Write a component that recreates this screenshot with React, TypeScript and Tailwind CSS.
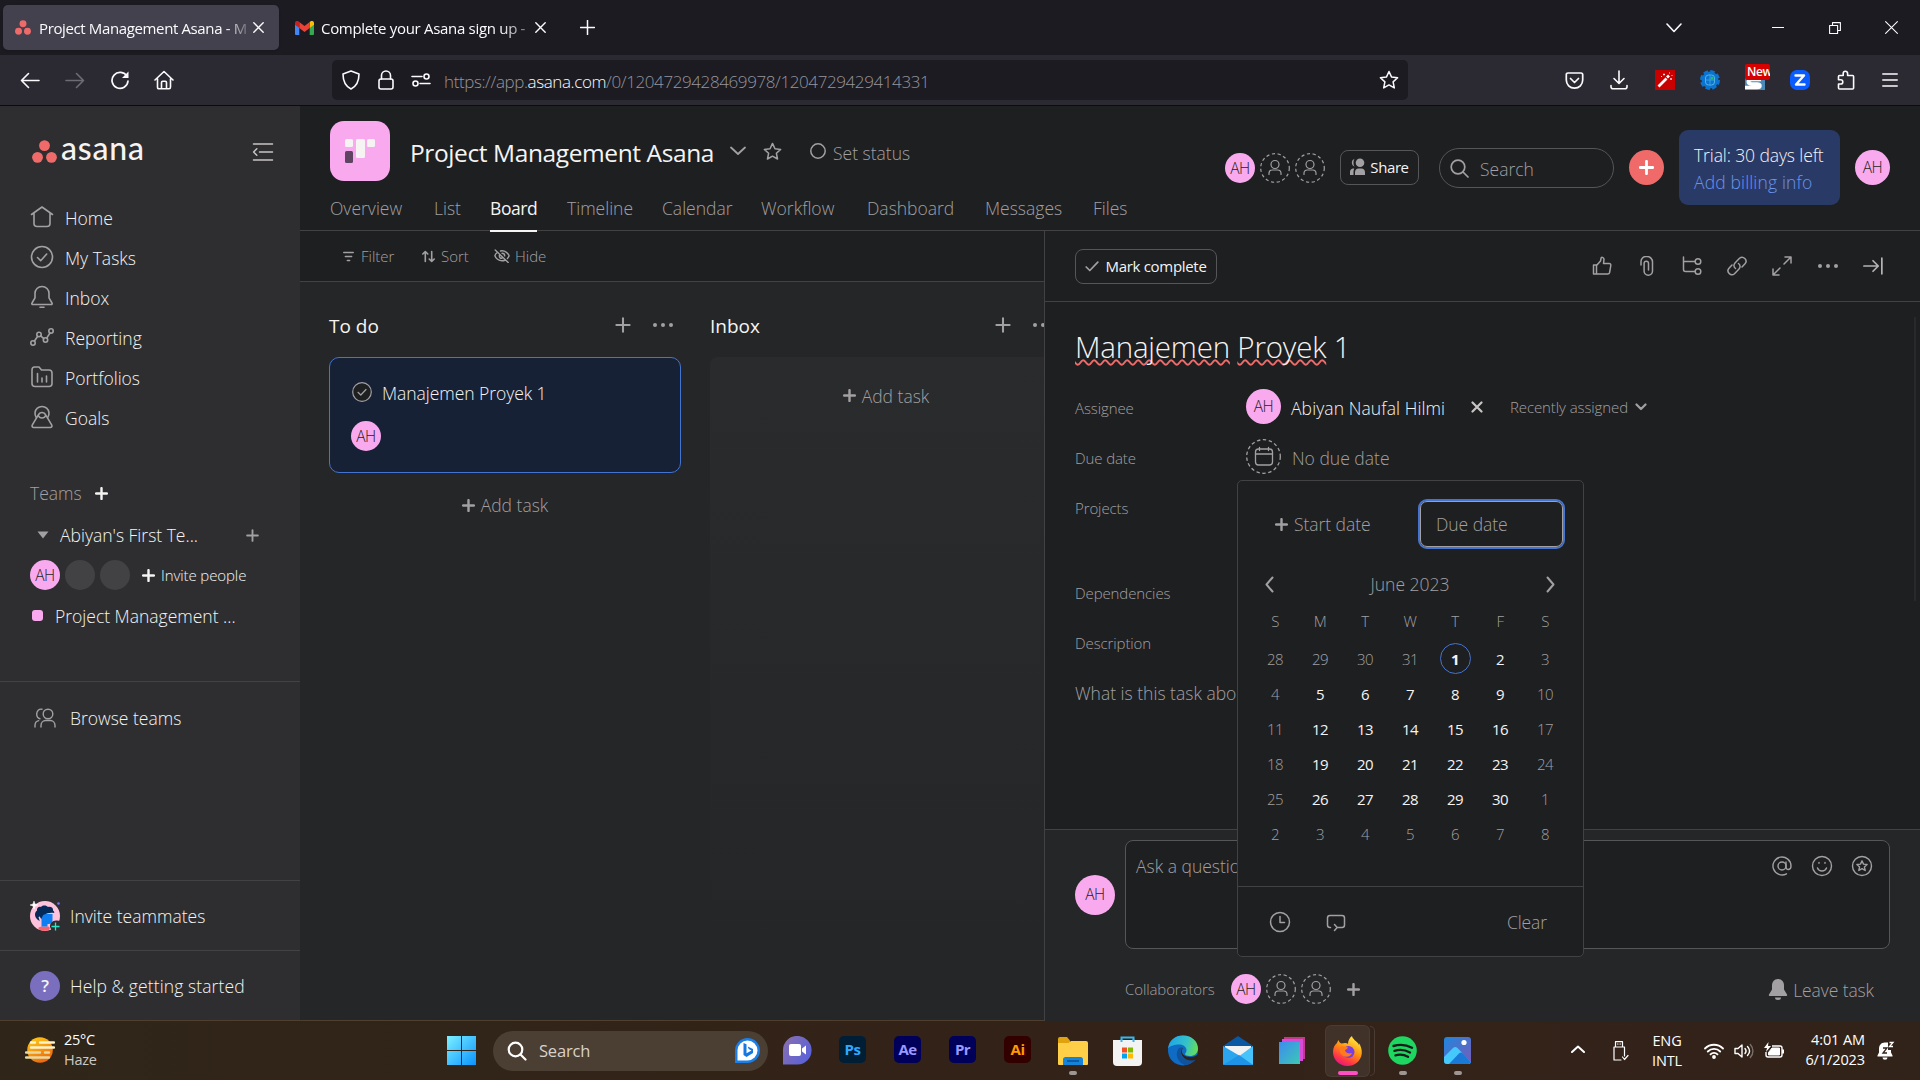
import React from "react";

type IconProps = { w?: number; h?: number; vb?: string; sw?: number; className?: string; children: React.ReactNode };

function Ic({ w = 20, h, vb = "0 0 20 20", sw = 1.5, className = "", children }: IconProps) {
  return (
    <svg
      width={w}
      height={h ?? w}
      viewBox={vb}
      fill="none"
      stroke="currentColor"
      strokeWidth={sw}
      strokeLinecap="round"
      strokeLinejoin="round"
      className={"shrink-0 " + className}
    >
      {children}
    </svg>
  );
}

function Plus({ size = 13, sw = 2.6, className = "" }: { size?: number; sw?: number; className?: string }) {
  return (
    <Ic w={size} vb="0 0 14 14" sw={sw} className={className}>
      <path d="M7 1.2v11.6M1.2 7h11.6" />
    </Ic>
  );
}

function Dots({ className = "" }: { className?: string }) {
  return (
    <Ic w={22} h={6} vb="0 0 22 6" sw={0} className={className}>
      <g fill="currentColor">
        <circle cx="3" cy="3" r="2" />
        <circle cx="11" cy="3" r="2" />
        <circle cx="19" cy="3" r="2" />
      </g>
    </Ic>
  );
}

function Avatar({ className }: { className: string }) {
  return (
    <div className={"flex shrink-0 items-center justify-center rounded-full bg-[#f9aaef] text-[#1e1f21] " + className}>
      <span className="mt-[1px] text-[15.500px] leading-none font-[350] tracking-[-0.5px]">AH</span>
    </div>
  );
}

function Ghost() {
  return (
    <Ic w={30} vb="0 0 30 30" sw={1.2} className="text-[#a2a0a2]">
      <circle cx="15" cy="15" r="14.3" strokeDasharray="3.2 2.6" strokeLinecap="butt" />
      <circle cx="15" cy="11.5" r="4" />
      <path d="M9 21.5v-1.2c0-2 1.500-3.300 3.400-3.300h5.200c1.900 0 3.400 1.300 3.400 3.300v1.200" />
    </Ic>
  );
}

const STAR = "M10 1.500l2.600 5.600 6 .7-4.500 4.100 1.200 6-5.300-3-5.300 3 1.200-6-4.500-4.100 6-.7z";

function AsanaDots({ w, h }: { w: number; h: number }) {
  return (
    <svg width={w} height={h} viewBox="0 0 24 22" className="shrink-0">
      <g fill="#f06a6a">
        <circle cx="12" cy="5.300" r="5.200" />
        <circle cx="5.300" cy="16.600" r="5.200" />
        <circle cx="18.700" cy="16.600" r="5.200" />
      </g>
    </svg>
  );
}

function BrowserTabs() {
  return (
    <div className="flex h-[55px] items-center bg-[#1c1b22] pl-[3px] text-[15px] font-normal text-[#fbfbfe]">
      <div className="flex h-[45px] w-[276px] items-center rounded-[5px] bg-[#42414d] pl-[12px] shadow">
        <AsanaDots w={16} h={15} />
        <div className="mt-[2px] ml-[8px] w-[208px] overflow-hidden tracking-[-0.37px] whitespace-nowrap [mask-image:linear-gradient(to_right,black_90%,transparent_103%)]">
          Project Management Asana - M
        </div>
        <Ic w={11} vb="0 0 11 11" sw={1.4} className="ml-[6px]">
          <path d="M.8.8l9.400 9.400M10.200.8L.8 10.200" />
        </Ic>
      </div>
      <svg width="19" height="14" viewBox="0 0 19 14" className="ml-[16px] shrink-0">
        <path d="M0 2v11a1 1 0 0 0 1 1h3.300V5z" fill="#4285f4" />
        <path d="M19 2v11a1 1 0 0 1-1 1h-3.300V5z" fill="#34a853" />
        <path d="M14.700 1v6L19 3.800V2c0-2-2.200-2.500-3.300-1.800z" fill="#fbbc04" />
        <path d="M4.300 7V1l5.200 4 5.200-4v6L9.500 11z" fill="#ea4335" />
        <path d="M0 2v1.800L4.300 7V1L3.300.2C2.200-.5 0 0 0 2z" fill="#c5221f" />
      </svg>
      <div className="mt-[2px] ml-[7px] w-[204px] overflow-hidden tracking-[-0.3px] whitespace-nowrap [mask-image:linear-gradient(to_right,black_88%,transparent_110%)]">
        Complete your Asana sign up -
      </div>
      <Ic w={11} vb="0 0 11 11" sw={1.4} className="ml-[10px]">
        <path d="M.8.8l9.400 9.400M10.200.8L.8 10.200" />
      </Ic>
      <Ic w={15} vb="0 0 15 15" sw={1.5} className="ml-[34px]">
        <path d="M7.500.5v14M.5 7.500h14" />
      </Ic>
      <Ic w={16} h={10} vb="0 0 16 10" sw={1.600} className="mr-[90px] ml-auto">
        <path d="M1 1l7 7.500L15 1" />
      </Ic>
      <Ic w={12} h={12} vb="0 0 12 12" sw={1} className="mr-[45px]">
        <path d="M0 5.500h12" />
      </Ic>
      <Ic w={12} vb="0 0 12 12" sw={1.1} className="mr-[44px]">
        <path d="M.6 3.500h8v8h-8zM3.500 3.200V.6h7.900v7.900H8.800" />
      </Ic>
      <Ic w={13} vb="0 0 13 13" sw={1.1} className="mr-[22px]">
        <path d="M.6.6l11.800 11.800M12.400.6L.6 12.400" />
      </Ic>
    </div>
  );
}

function BrowserToolbar() {
  return (
    <div className="flex h-[51px] items-center border-b border-[#0c0c0d] bg-[#2b2a33] pl-[20px] text-[#fbfbfe]">
      <Ic w={20} sw={1.6}>
        <path d="M1.500 10.500H19M8.500 3.500l-7 7 7 7" />
      </Ic>
      <Ic w={20} sw={1.6} className="ml-[25px] text-[#6d6c75]">
        <path d="M1 10.500h17.500M11.500 3.500l7 7-7 7" />
      </Ic>
      <Ic w={20} sw={1.7} className="ml-[25px]">
        <path d="M17 6.500A8 8 0 1 0 18 11" />
        <path d="M18.500 1.500v6.500h-6.500z" fill="currentColor" stroke="none" />
      </Ic>
      <Ic w={20} sw={1.6} className="ml-[24px]">
        <path d="M1 10l9-8.500L19 10M3.500 8.500V17c0 1 .6 1.800 1.500 1.800h10c.9 0 1.500-.8 1.500-1.800V8.500M7.500 18.500v-6c0-.8.500-1.200 1.200-1.200h2.600c.7 0 1.200.4 1.200 1.200v6" />
      </Ic>
      <div className="ml-[158px] flex h-[40px] w-[1076px] items-center rounded-[5px] bg-[#1c1b22] pl-[9px]">
        <Ic w={20} sw={1.6}>
          <path d="M10 1l8 3c0 7-2 12-8 15C4 16 2 11 2 4z" />
        </Ic>
        <Ic w={18} h={20} vb="0 0 18 20" sw={1.6} className="ml-[16px]">
          <rect x="2" y="9" width="14" height="10" rx="2" />
          <path d="M4.500 9V5.500a4.500 4.500 0 0 1 9 0V9" />
        </Ic>
        <Ic w={20} sw={1.6} className="ml-[16px]">
          <path d="M1 6.500h10M9 13.500h10" />
          <circle cx="15.500" cy="6.500" r="2.500" />
          <circle cx="4.500" cy="13.500" r="2.500" />
        </Ic>
        <div className="mt-[4px] ml-[13px] text-[17px] tracking-[-0.4px] whitespace-nowrap text-[#96959c]">
          https://app.<span className="text-[#fbfbfe]">asana.com</span>/0/1204729428469978/1204729429414331
        </div>
        <Ic w={20} sw={1.5} className="mr-[9px] ml-auto">
          <path d={STAR} />
        </Ic>
      </div>
      <div className="mr-[22px] ml-auto flex items-center">
        <Ic w={19} vb="0 0 19 19" sw={1.7}>
          <path d="M3 2h13c1 0 1.700.7 1.700 1.700V9c0 4.500-3.500 8.200-8.200 8.200S1.300 13.500 1.300 9V3.700C1.300 2.700 2 2 3 2zM5.500 7.500l4 4 4-4" />
        </Ic>
        <Ic w={18} h={20} vb="0 0 18 20" sw={1.6} className="ml-[26px]">
          <path d="M9 1v12M4 8.500l5 5 5-5M1 15.500v1.200c0 1.200.8 2 2 2h12c1.200 0 2-.8 2-2v-1.200" />
        </Ic>
        <svg width="20" height="20" viewBox="0 0 20 20" className="ml-[27px]">
          <rect width="20" height="20" fill="#c80000" />
          <path d="M3.500 16.500l8-8" stroke="#fff" strokeWidth="2.600" />
          <path d="M12 7.500l2-2" stroke="#fff" strokeWidth="2.600" />
          <path d="M9 3.500v2M8 4.500h2M16 8v2M15 9h2M14.500 2.500l.01 1M17 5l.01 1M6 6.500h1M12 3l.01.01" stroke="#ffd5d5" strokeWidth="1" />
        </svg>
        <svg width="20" height="20" viewBox="0 0 20 20" className="ml-[25px]">
          <circle cx="10" cy="10" r="8.400" fill="#0b74d1" />
          <circle cx="10" cy="10" r="8.600" fill="none" stroke="#0b74d1" strokeWidth="2.800" strokeDasharray="4.500 2.250" />
          <rect x="5.500" y="5" width="9" height="10" rx="3" fill="none" stroke="#54b4e8" strokeWidth="1" />
          <path d="M10 4.500v11M5.500 10h9" stroke="#3a9fe0" strokeWidth="1" />
          <circle cx="12" cy="8" r="1.500" fill="#23c06b" />
        </svg>
        <div className="relative ml-[25px] h-[20px] w-[20px] overflow-visible">
          <svg width="20" height="20" viewBox="0 0 20 20">
            <rect width="20" height="20" fill="#4b8ab8" />
            <path d="M16 9.500H7c-5 0-5 4.500 0 4.500h5c4 0 4 3.500 0 3.500H0" stroke="#fff" strokeWidth="3.500" fill="none" />
          </svg>
          <div className="absolute -top-[6px] left-0 h-[16px] w-[25px] overflow-hidden rounded-[2px] bg-[#d60000] pl-[2px] text-[12px] leading-[15px] font-semibold tracking-[-0.4px] text-white">
            New
          </div>
        </div>
        <div className="ml-[25px] flex h-[20px] w-[20px] items-center justify-center rounded-[7px] bg-[#0b5cff]">
          <Ic w={12} vb="0 0 12 12" sw={2.4}>
            <path d="M1.500 1.500h8.500l-8 9h8.500" />
          </Ic>
        </div>
        <Ic w={20} sw={1.600} className="ml-[26px]">
          <path d="M2.500 18V14h2.200a2.100 2.100 0 1 0 0-4.200H2.500V6.500c0-.6.400-1 1-1h3.700V3.400a2.200 2.200 0 0 1 4.400 0v2.100h5c.6 0 1 .4 1 1V18c0 .6-.4 1-1 1h-13c-.6 0-1.100-.4-1.100-1z" />
        </Ic>
        <Ic w={16} h={14} vb="0 0 16 14" sw={1.5} className="ml-[26px]">
          <path d="M.8 1h14.400M.8 7h14.400M.8 13h14.400" />
        </Ic>
      </div>
    </div>
  );
}

const navItems: { label: string; icon: React.ReactNode }[] = [
  { label: "Home", icon: <path d="M1.500 9.500L12 2l10.500 7.500M4 8v10.500c0 1.700 1.300 3 3 3h10c1.700 0 3-1.300 3-3V8" /> },
  {
    label: "My Tasks",
    icon: (
      <>
        <circle cx="12" cy="12" r="10.500" />
        <path d="M7.500 12.500l3.200 3.200 6-6.700" />
      </>
    ),
  },
  {
    label: "Inbox",
    icon: (
      <>
        <path d="M12 1.500c-4 0-7 3-7 7v4.300L2 18c-.5.800 0 1.500.8 1.500h18.400c.8 0 1.300-.7.800-1.500l-3-5.200V8.500c0-4-3-7-7-7z" />
        <path d="M10 22.300h4" />
      </>
    ),
  },
  {
    label: "Reporting",
    icon: (
      <>
        <circle cx="3" cy="18" r="2.200" />
        <circle cx="9" cy="9.500" r="2.200" />
        <circle cx="15.500" cy="15" r="2.200" />
        <circle cx="21" cy="6" r="2.200" />
        <path d="M4.300 16.200l3.400-4.900M10.700 10.900l3.100 2.700M16.700 13.100L20 8" />
      </>
    ),
  },
  {
    label: "Portfolios",
    icon: (
      <>
        <path d="M2 5c0-1.700 1-3 2.500-3H9l2.500 3H19c1.700 0 3 1.300 3 3v10.500c0 1.700-1.300 3-3 3H5c-1.700 0-3-1.300-3-3z" />
        <path d="M7.500 8.500v8.500M12 13v4M16.500 11v6" />
      </>
    ),
  },
  {
    label: "Goals",
    icon: (
      <>
        <path d="M6.300 12.500a7 7 0 1 1 11.400 0" />
        <path d="M8.200 10.200c1.800-3.600 5.800-3.600 7.600 0l6 10c.5 1.200-.2 2.300-1.500 2.300H3.700c-1.300 0-2-1.100-1.500-2.300z" />
        <path d="M8.300 10.500a4 4 0 0 0 7.400 0" />
      </>
    ),
  },
];

function Sidebar() {
  return (
    <aside className="flex h-[914px] w-[300px] shrink-0 flex-col bg-[#2e2e30] text-[17.500px] text-[#f5f4f3]">
      <div className="flex h-[91px] items-center pl-[32px]">
        <AsanaDots w={25} h={23} />
        <span className="-mt-[7px] ml-[4px] w-[84px] font-['Lato'] text-[32px] leading-[30px] font-medium tracking-[0.8px]">asana</span>
        <Ic w={22} h={18} vb="0 0 22 18" sw={1.5} className="ml-[107px] text-[#c7c4c4]">
          <path d="M1.500 1h19M7.500 9h13M1.500 17h19M4.800 5.800L1.600 9l3.200 3.200" />
        </Ic>
      </div>
      <nav className="flex flex-col">
        {navItems.map((n) => (
          <div key={n.label} className="flex h-[40px] items-center pl-[30px]">
            <Ic w={24} vb="0 0 24 24" sw={1.6} className="text-[#a2a0a2]">
              {n.icon}
            </Ic>
            <span className="mt-[2px] ml-[11px]">{n.label}</span>
          </div>
        ))}
      </nav>
      <div className="mt-[37px] flex h-[38px] items-center pl-[30px]">
        <span className="mt-[1px] w-[65px] text-[#a2a0a2]">Teams</span>
        <Plus />
      </div>
      <div className="mt-[2px] flex h-[42px] items-center pl-[37px]">
        <svg width="12" height="8" viewBox="0 0 12 8">
          <path d="M.5.5h11L6 7.500z" fill="#a2a0a2" />
        </svg>
        <span className="ml-[11px] w-[186px]">Abiyan's First Te...</span>
        <Plus className="text-[#a2a0a2]" sw={2} />
      </div>
      <div className="mt-[4px] flex h-[30px] items-center gap-[5px] pl-[30px]">
        <Avatar className="h-[30px] w-[30px]" />
        <div className="h-[30px] w-[30px] rounded-full bg-[#424244]" />
        <div className="h-[30px] w-[30px] rounded-full bg-[#424244]" />
        <Plus className="ml-[7px]" />
        <span className="ml-[1px] text-[15px] tracking-[-0.1px]">Invite people</span>
      </div>
      <div className="mt-[7px] flex h-[36px] items-center pl-[32px]">
        <div className="h-[11px] w-[11px] rounded-[3px] bg-[#f9aaef]" />
        <span className="mt-[2px] ml-[12px] whitespace-nowrap">Project Management ...</span>
      </div>
      <div className="mt-[48px] flex h-[199px] border-t border-[#424244] pt-[15px] pl-[34px]">
        <div className="flex h-[42px] items-center">
          <Ic w={22} vb="0 0 22 22" sw={1.4} className="text-[#a2a0a2]">
            <circle cx="14" cy="7" r="4.800" />
            <path d="M8 2.200C5 1.600 2.700 4 2.700 7c0 2.200 1.300 4.200 3.200 4.700M7 20v-1.500c0-3 2.200-5 4.500-5h5c2.300 0 4.500 2 4.500 5V20M1 20v-1.500c0-2.600 1.500-4.500 3.700-4.900" />
          </Ic>
          <span className="ml-[14px]">Browse teams</span>
        </div>
      </div>
      <div className="flex h-[70px] items-center border-t border-[#424244] pl-[30px]">
        <svg width="30" height="30" viewBox="0 0 30 30">
          <circle cx="15" cy="15" r="15" fill="#ffc2dc" />
          <path d="M8.500 26.500l3-1h7l1.500 1.500-1 2c-3 1.200-7 1.200-10.500-.5z" fill="#f9626a" />
          <path d="M10 13h12.500v6c0 3-2 4.500-5 4v2.500h-6v-7z" fill="#0d7ff2" />
          <path d="M8 19c-2-1.500-3-3.500-3-5.500C5 11 6.500 10 7 9.500 6.500 7 9 5 11 6c2-2.500 6-1.500 7 0 3-.8 5.500 1 5 3.500.8.500 1.500 1.500 1.200 2.500-3-.8-6-.3-11 2l-2 4-1.500-2.500-1.200.5 1.200 4z" fill="#052a57" />
          <path d="M27 19.500c-4-.5-7.500 2.500-7 6.500l1.500 3.500H30V20z" fill="#2e2e30" />
          <path d="M25.500 21.500v8M21.500 25.500h8" stroke="#25e8c8" strokeWidth="1.300" />
          <path d="M4 0l1 3 3 1-3 1-1 3-1-3-3-1 3-1z" fill="#fff" stroke="#fff" strokeWidth="0.500" />
          <circle cx="28.500" cy="2.500" r="1.300" fill="#796eff" />
        </svg>
        <span className="mt-[1px] ml-[10px]">Invite teammates</span>
      </div>
      <div className="flex h-[70px] items-center border-t border-[#424244] pl-[30px]">
        <div className="flex h-[30px] w-[30px] items-center justify-center rounded-full bg-[#7a6fbe] text-[17px] font-semibold">?</div>
        <span className="mt-[1px] ml-[10px] tracking-[0.1px]">Help &amp; getting started</span>
      </div>
    </aside>
  );
}

const projectTabs: [string, string][] = [
  ["Overview", "w-[74px]"],
  ["List", "w-[26px]"],
  ["Board", "w-[47px]"],
  ["Timeline", "w-[65px]"],
  ["Calendar", "w-[69px]"],
  ["Workflow", "w-[76px]"],
  ["Dashboard", "w-[88px]"],
  ["Messages", "w-[78px]"],
  ["Files", "w-[33px]"],
];

function ProjectHeader() {
  return (
    <header className="flex h-[125px] shrink-0 border-b border-[#424244] bg-[#1e1f21] text-[17.500px] text-[#a2a0a2]">
      <div className="flex w-[925px] flex-col pt-[15px] pl-[30px]">
        <div className="flex h-[60px] items-center">
          <svg width="60" height="60" viewBox="0 0 60 60">
            <rect width="60" height="60" rx="14" fill="#f9aaef" />
            <g fill="#f5f4f3">
              <rect x="15" y="18" width="8" height="8" rx="1.500" />
              <rect x="26" y="18" width="9" height="19" rx="1.500" />
              <rect x="37" y="18" width="8" height="8" rx="1.500" />
            </g>
            <rect x="15" y="30" width="8" height="12" rx="1.500" fill="#5f4462" />
          </svg>
          <h1 className="mt-[4px] ml-[20px] w-[320px] text-[24.500px] font-normal tracking-[-0.4px] whitespace-nowrap text-[#f5f4f3]">Project Management Asana</h1>
          <Ic w={16} h={10} vb="0 0 16 10" sw={1.8}>
            <path d="M1 1.500l7 6.500 7-6.500" />
          </Ic>
          <Ic w={19} sw={1.600} className="ml-[17px]">
            <path d={STAR} />
          </Ic>
          <Ic w={16} vb="0 0 16 16" sw={1.5} className="ml-[28px]">
            <circle cx="8" cy="8" r="7.200" />
          </Ic>
          <span className="mt-[4px] ml-[7px]">Set status</span>
        </div>
        <div className="flex h-[49px] gap-[30px] pt-[16px]">
          {projectTabs.map(([label, width]) => (
            <div key={label} className={"relative leading-[22px] whitespace-nowrap " + width + (label === "Board" ? " font-normal tracking-[-0.4px] text-[#f5f4f3]" : "")}>
              {label}
              {label === "Board" && <div className="absolute -bottom-[2px] left-0 h-[2px] w-full bg-[#f5f4f3]" />}
            </div>
          ))}
        </div>
      </div>
      <div className="flex items-center">
        <Avatar className="mr-[5px] h-[30px] w-[30px]" />
        <Ghost />
        <div className="w-[5px]" />
        <Ghost />
        <button className="-mt-[1px] ml-[15px] flex h-[35px] w-[79px] items-center justify-center gap-[4px] rounded-[8px] border border-[#565557] text-[15px] font-normal tracking-[-0.4px] text-[#f5f4f3]">
          <svg width="16" height="18" viewBox="0 0 16 18" className="-mt-[2px] shrink-0">
            <g fill="#a2a0a2">
              <circle cx="10" cy="4.800" r="4.300" />
              <path d="M4.500.8a4.300 4.300 0 0 0 0 8C3 6 3.200 3 4.500.8zM5 17v-2.800c0-2.200 1.500-3.700 3.500-3.700h3c2 0 3.500 1.500 3.500 3.700V17zM0 17v-2.800c0-2 1-3.300 2.800-3.700h1.500C3.700 12 3.500 13 3.500 14v3z" />
            </g>
          </svg>
          Share
        </button>
        <div className="ml-[20px] flex h-[40px] w-[175px] items-center rounded-full border border-[#565557] pl-[10px]">
          <Ic w={19} vb="0 0 19 19" sw={1.700}>
            <circle cx="8" cy="8" r="6.800" />
            <path d="M13 13l5 5" />
          </Ic>
          <span className="mt-[3px] ml-[11px]">Search</span>
        </div>
        <div className="-mt-[1px] ml-[15px] flex h-[35px] w-[35px] items-center justify-center rounded-full bg-[#f06a6a] text-white">
          <Plus size={15} />
        </div>
        <div className="-mt-[1px] ml-[15px] flex h-[75px] w-[161px] flex-col justify-center rounded-[9px] bg-[#2a3a67] pt-[2px] pl-[15px] leading-[27px] whitespace-nowrap text-[#f5f4f3]">
          <span className="tracking-[-0.1px]">Trial: 30 days left</span>
          <span className="tracking-[0.15px] text-[#6a93ea]">Add billing info</span>
        </div>
        <Avatar className="-mt-[1px] ml-[15px] h-[35px] w-[35px]" />
      </div>
    </header>
  );
}

function ColumnHead({ title, plusGap }: { title: string; plusGap: string }) {
  return (
    <div className="flex h-[28px] items-center text-[#a2a0a2]">
      <h2 className={"mt-[2px] text-[19px] font-normal whitespace-nowrap text-[#f5f4f3] " + plusGap}>{title}</h2>
      <Plus size={16} sw={1.8} />
      <Dots className="ml-[21px]" />
    </div>
  );
}

function Board() {
  return (
    <section className="flex w-[744px] shrink-0 flex-col bg-[#252628] text-[17.500px] text-[#a2a0a2]">
      <div className="flex h-[51px] items-center border-b border-[#424244] bg-[#1e1f21] pl-[43px] text-[15px]">
        <Ic w={11} h={11} vb="0 0 11 11" sw={1.600}>
          <path d="M.8 1.500h9.400M2.400 5.500h6.200M4.400 9.500h2.200" />
        </Ic>
        <span className="ml-[7px] w-[61px]">Filter</span>
        <Ic w={13} vb="0 0 13 13" sw={1.600}>
          <path d="M3.300 11.500v-10M.8 4l2.500-2.500L5.800 4M9.700 1.500v10M7.200 9l2.500 2.500L12.200 9" />
        </Ic>
        <span className="ml-[6px] w-[53px]">Sort</span>
        <Ic w={16} h={14} vb="0 0 16 14" sw={1.400}>
          <path d="M1.200 1l13 12.500M3.500 3.300C2 4.400 1 6 .9 6.800c.8 2.600 3.800 5 7.100 5 1.200 0 2.300-.3 3.300-.8M6.500 2c.5-.1 1-.2 1.500-.2 3.300 0 6.300 2.400 7.100 5-.3.9-.9 1.800-1.700 2.600M8 4.300c1.600 0 2.700 1.200 2.700 2.600M5.300 6.400c0 1.700 1.200 2.900 2.700 2.900" />
        </Ic>
        <span className="ml-[5px]">Hide</span>
      </div>
      <div className="flex flex-1 gap-[29px] overflow-hidden pt-[29px] pl-[29px]">
        <div className="flex w-[352px] shrink-0 flex-col">
          <ColumnHead title="To do" plusGap="w-[286px]" />
          <div className="mt-[18px] h-[116px] rounded-[10px] border border-[#4573d2] bg-[#172136] pt-[22px] pl-[21px]">
            <div className="flex h-[24px] items-center">
              <Ic w={20} sw={1.2} className="ml-[1px]">
                <circle cx="10" cy="10" r="9.300" fill="#1e1f21" />
                <path d="M6 10.300l2.800 2.700 5.200-5.500" />
              </Ic>
              <span className="mt-[3px] ml-[10px] tracking-[-0.05px] text-[#f5f4f3]">Manajemen Proyek 1</span>
            </div>
            <Avatar className="mt-[17px] h-[30px] w-[30px]" />
          </div>
          <div className="mt-[20px] flex h-[24px] items-center justify-center gap-[6px]">
            <Plus />
            <span className="mt-[1px]">Add task</span>
          </div>
        </div>
        <div className="flex w-[352px] shrink-0 flex-col">
          <ColumnHead title="Inbox" plusGap="w-[285px]" />
          <div className="mt-[18px] h-[588px] rounded-[8px] bg-linear-to-b from-[#2a2b2d] to-[#252628] pt-[26px]">
            <div className="flex h-[24px] items-center justify-center gap-[6px]">
              <Plus />
              <span className="mt-[2px]">Add task</span>
            </div>
          </div>
        </div>
      </div>
    </section>
  );
}

function DetailToolbar() {
  return (
    <div className="flex h-[71px] shrink-0 items-center border-b border-[#424244] pl-[30px]">
      <button className="flex h-[35px] w-[142px] items-center justify-center gap-[6px] rounded-[8px] border border-[#565557] text-[15px] font-normal tracking-[-0.3px] text-[#f5f4f3]">
        <Ic w={14} h={11} vb="0 0 14 11" sw={1.700} className="text-[#a2a0a2]">
          <path d="M1.200 6l3.600 3.500L12.800 1.200" />
        </Ic>
        Mark complete
      </button>
      <div className="mr-[37px] ml-auto flex items-center gap-[25px]">
        <Ic sw={1.500} className="ml-[1px]">
          <path d="M1.500 9h3v9h-3zM4.500 9.500L8.500 5l.7-3.300c.8-.8 2.800 0 2.800 1.800L11.500 7.500h5.500c1.300 0 2 .8 1.800 2l-1.200 7c-.2 1-1 1.500-2 1.500H4.500" />
        </Ic>
        <Ic sw={1.500}>
          <path d="M4 9V5.500a5 5 0 0 1 5-5h1a5.500 5.500 0 0 1 5.500 5.500v9a4.200 4.200 0 0 1-8.400 0V7.500a2.200 2.200 0 0 1 4.400 0V14" />
        </Ic>
        <Ic sw={1.500}>
          <path d="M1.500 1v12.500c0 1.300.8 2 2 2H13M1.500 5.500H13" />
          <circle cx="16" cy="5.500" r="2.800" />
          <circle cx="16" cy="15.500" r="2.800" />
        </Ic>
        <Ic sw={1.500}>
          <path d="M8.500 12.500c-2-1.500-2-4-.5-5.500l4.500-4.700a3.900 3.900 0 0 1 5.500 5.500l-3 3.200" />
          <path d="M11.500 7.500c2 1.500 2 4 .5 5.500l-4.500 4.700A3.900 3.900 0 0 1 2 12.200L5 9" />
        </Ic>
        <Ic sw={1.500}>
          <path d="M12 8l7-7M13 1h6v6M8 12l-7 7M7 19H1v-6" />
        </Ic>
        <Dots />
        <Ic w={20} h={18} vb="0 0 21 18" sw={1.800} className="-ml-[1px] text-[#b5b3b4]">
          <path d="M1 9h15M10.500 3.500L16 9l-5.500 5.500M19.800.8v16.400" />
        </Ic>
      </div>
    </div>
  );
}

const weeks = [
  [28, 29, 30, 31, 1, 2, 3],
  [4, 5, 6, 7, 8, 9, 10],
  [11, 12, 13, 14, 15, 16, 17],
  [18, 19, 20, 21, 22, 23, 24],
  [25, 26, 27, 28, 29, 30, 1],
  [2, 3, 4, 5, 6, 7, 8],
];

function Day({ day, row, col }: { day: number; row: number; col: number }) {
  const outside = (row === 0 && day > 20) || row === 5;
  const bright = !outside && col > 0 && col < 6;
  const today = row === 0 && day === 1;
  return (
    <div className="flex h-[35px] items-center justify-center">
      <div
        className={
          "flex h-[31px] w-[31px] items-center justify-center rounded-full pt-[1px] " +
          (today ? "border border-[#4573d2] font-bold " : bright ? "font-normal " : "") +
          (bright ? "text-[#f5f4f3]" : "text-[#a2a0a2]")
        }
      >
        {day}
      </div>
    </div>
  );
}

function DatePicker() {
  return (
    <div className="absolute top-[249px] left-[192px] flex h-[477px] w-[347px] flex-col rounded-[5px] border border-[#424244] bg-[#1e1f21] text-[15px] tracking-[-0.5px] text-[#a2a0a2]">
      <div className="mt-[18px] flex h-[50px] items-center pl-[37px] text-[17.500px] tracking-[-0.05px]">
        <Plus />
        <span className="mt-[1px] ml-[6px] w-[124px]">Start date</span>
        <div className="flex h-[50px] w-[147px] items-center rounded-[9px] border-2 border-[#4573d2]">
          <div className="flex h-[46px] w-[143px] items-center rounded-[7px] border border-[#a2a0a2] pt-[1px] pl-[15px]">Due date</div>
        </div>
      </div>
      <div className="mt-[22px] flex h-[26px] items-center justify-between pr-[28px] pl-[27px] text-[17.500px] tracking-normal">
        <Ic w={9} h={17} vb="0 0 9 17" sw={2}>
          <path d="M7.500 1.500L1.500 8.500l6 7" />
        </Ic>
        <span className="mt-[1px]">June 2023</span>
        <Ic w={9} h={17} vb="0 0 9 17" sw={2}>
          <path d="M1.500 1.500l6 7-6 7" />
        </Ic>
      </div>
      <div className="mt-[7px] -ml-[1px] grid w-[315px] grid-cols-7 self-center text-center">
        {["S", "M", "T", "W", "T", "F", "S"].map((d, i) => (
          <div key={i} className="h-[37px] leading-[35px]">
            {d}
          </div>
        ))}
        {weeks.map((w, r) => w.map((d, c) => <Day key={r + "-" + c} day={d} row={r} col={c} />))}
      </div>
      <div className="mt-auto flex h-[70px] items-center border-t border-[#424244] pr-[36px] pl-[31px] text-[17.500px] tracking-[-0.1px]">
        <Ic w={22} vb="0 0 22 22" sw={1.500}>
          <circle cx="11" cy="11" r="9.500" />
          <path d="M11 5.500V11.500h4.500" />
        </Ic>
        <Ic w={20} sw={1.500} className="ml-[35px]">
          <path d="M4.500 15.500H4C2.500 15.500 1.500 14.500 1.500 13V6C1.500 4.500 2.500 3.500 4 3.500h12c1.500 0 2.500 1 2.500 2.500V13c0 1.500-1 2.500-2.500 2.500h-5M8.500 12.500l2.700 3-2.700 3" />
        </Ic>
        <span className="mt-[2px] ml-auto">Clear</span>
      </div>
    </div>
  );
}

function Field({ label, children }: { label: string; children?: React.ReactNode }) {
  return (
    <div className="flex h-[50px] items-center">
      <span className="mt-[3px] w-[171px] text-[15px] tracking-[-0.1px]">{label}</span>
      {children}
    </div>
  );
}

const SQUIGGLE = "underline decoration-[#f06a6a] decoration-wavy decoration-[1.5px] underline-offset-[1px] [text-decoration-skip-ink:none]";

function TaskDetail() {
  return (
    <section className="relative flex w-[876px] flex-col border-l border-[#424244] bg-[#1e1f21] text-[17.500px] text-[#a2a0a2]">
      <DetailToolbar />
      <div className="flex h-[527px]">
        <div className="flex flex-1 flex-col pl-[30px]">
          <h2 className="mt-[23px] h-[42px] text-[29.500px] leading-[44px] tracking-[-0.2px] whitespace-nowrap text-[#f5f4f3]">
            <span className={SQUIGGLE}>Manajemen</span> <span className={SQUIGGLE}>Proyek</span> 1
          </h2>
          <div className="mt-[15px]">
            <Field label="Assignee">
              <Avatar className="-mt-[1px] h-[35px] w-[35px]" />
              <span className="mt-[2px] ml-[10px] w-[180px] tracking-[0.1px] whitespace-nowrap text-[#f5f4f3]">Abiyan Naufal Hilmi</span>
              <Ic w={12} vb="0 0 12 12" sw={2.200} className="-mt-[1px] text-[#c7c4c4]">
                <path d="M1.500 1.500l9 9M10.500 1.500l-9 9" />
              </Ic>
              <span className="mt-[1px] ml-[27px] w-[119px] text-[15px] tracking-[-0.1px] whitespace-nowrap">Recently assigned</span>
              <Ic w={12} h={8} vb="0 0 12 8" sw={2.200} className="-mt-[1px] ml-[6px]">
                <path d="M1.500 1.500L6 6l4.500-4.500" />
              </Ic>
            </Field>
            <Field label="Due date">
              <Ic w={35} vb="0 0 35 35" sw={1.300} className="-mt-[1px]">
                <circle cx="17.500" cy="17.500" r="16.800" strokeDasharray="3.400 2.600" strokeLinecap="butt" />
                <rect x="9.500" y="10" width="17" height="16" rx="3" />
                <path d="M9.500 15h17M13.500 8.500v3M22.500 8.500v3" />
              </Ic>
              <span className="mt-[2px] ml-[11px]">No due date</span>
            </Field>
            <Field label="Projects" />
          </div>
          <div className="mt-[35px]">
            <Field label="Dependencies" />
            <Field label="Description" />
          </div>
          <div className="flex h-[50px] items-center pt-[2px]">What is this task about?</div>
        </div>
        <div className="mt-[15px] mr-[4px] h-[284px] w-[2px] bg-[#28292b]" />
      </div>
      <div className="flex h-[192px] flex-col border-t border-[#424244] bg-[#252628] pt-[10px] pl-[30px]">
        <div className="flex h-[109px] items-center">
          <Avatar className="mr-[10px] h-[40px] w-[40px]" />
          <div className="flex h-[109px] w-[765px] rounded-[8px] border border-[#565557] bg-[#1e1f21] pt-[12px] pr-[16px] pl-[10px]">
            <span className="mr-auto leading-[27px]">Ask a question or post an update...</span>
            <div className="flex h-[26px] items-center gap-[18px]">
              <Ic w={22} vb="0 0 22 22" sw={1.400}>
                <circle cx="11" cy="11" r="4" />
                <path d="M15 7v5c0 3.500 5 3.500 5-1a9 9 0 1 0-4.500 7.800" />
              </Ic>
              <Ic w={22} vb="0 0 22 22" sw={1.400}>
                <circle cx="11" cy="11" r="9.500" />
                <path d="M6.500 13c1.500 4 7.500 4 9 0M8 7.500v.8M14 7.500v.8" />
              </Ic>
              <Ic w={22} vb="0 0 22 22" sw={1.400}>
                <circle cx="11" cy="11" r="9.500" />
                <path d="M11 5.800l1.500 3.300 3.600.4-2.700 2.400.8 3.600-3.200-1.900-3.200 1.900.8-3.600-2.700-2.400 3.600-.4z" />
              </Ic>
            </div>
          </div>
        </div>
        <div className="mt-[25px] flex h-[30px] items-center pl-[50px]">
          <span className="mt-[1px] w-[106px] text-[15px] tracking-[-0.1px]">Collaborators</span>
          <Avatar className="mr-[5px] h-[30px] w-[30px]" />
          <Ghost />
          <div className="w-[5px]" />
          <Ghost />
          <Plus className="ml-[16px]" />
          <svg width="20" height="21" viewBox="0 0 20 21" className="mr-[5px] ml-auto">
            <path d="M10 0C6 0 4 3 4 6.500v4L1 15.500c-.5 1 0 1.500 1 1.500h16c1 0 1.500-.5 1-1.500l-3-5v-4C16 3 14 0 10 0zM7 18.500h6a3 2.500 0 0 1-6 0z" fill="#a2a0a2" />
          </svg>
          <span className="mt-[3px] mr-[46px] tracking-[-0.1px]">Leave task</span>
        </div>
      </div>
      <DatePicker />
    </section>
  );
}

function Slot({ children, active = false, running = false }: { children: React.ReactNode; active?: boolean; running?: boolean }) {
  return (
    <div className={"relative flex h-[50px] w-[43px] items-center justify-center rounded-[5px] " + (active ? "bg-[#403129] ring-1 ring-[#4a3c34]" : "")}>
      {children}
      {running && <div className="absolute bottom-[1px] h-[4px] w-[8px] rounded-full bg-[#9d9692]" />}
      {active && <div className="absolute bottom-[1px] h-[4px] w-[20px] rounded-full bg-[#ff4fc3]" />}
      {active && <div className="absolute top-0 -right-[6px] h-full w-[5px] rounded-r-[5px] border border-l-0 border-[#4a3c34]" />}
    </div>
  );
}

function Adobe({ label, tone }: { label: string; tone: string }) {
  return (
    <Slot>
      <div className={"-mt-[3px] flex h-[27px] w-[27px] items-center justify-center rounded-[5px] text-[15px] font-bold tracking-[-0.500px] " + tone}>{label}</div>
    </Slot>
  );
}

function Taskbar() {
  return (
    <footer className="flex h-[60px] items-center border-t border-[#4f3f30] bg-linear-to-r from-[#2f2619] via-[#332217] to-[#32231a] text-[15px] font-normal text-white">
      <div className="flex w-[447px] items-center pl-[25px]">
        <svg width="30" height="27" viewBox="0 0 30 27">
          <defs>
            <linearGradient id="sun" x1="0" y1="0" x2="0.500" y2="1">
              <stop offset="0" stopColor="#ffd21a" />
              <stop offset="1" stopColor="#ee6a0c" />
            </linearGradient>
          </defs>
          <circle cx="15" cy="13" r="12.800" fill="url(#sun)" />
          <path d="M6 5.500h4M15 5.500h14M6 10.500h23" stroke="#fff3c8" strokeWidth="2.400" strokeLinecap="round" />
          <path d="M1 15.500h14M20 15.500h4M1 20.500h23" stroke="#e8d9a0" strokeWidth="2.400" strokeLinecap="round" />
        </svg>
        <div className="-mt-[2px] ml-[9px] flex flex-col text-[14.500px] leading-[20px] tracking-[-0.3px]">
          <span>25°C</span>
          <span className="text-[#cfc8c2]">Haze</span>
        </div>
      </div>
      <svg width="29" height="29" viewBox="0 0 29 29">
        <defs>
          <linearGradient id="win" x1="0" y1="0" x2="1" y2="1">
            <stop offset="0" stopColor="#7cf0ff" />
            <stop offset="1" stopColor="#0a93ff" />
          </linearGradient>
        </defs>
        <path d="M0 0h14v14H0zM15 0h14v14H15zM0 15h14v14H0zM15 15h14v14H15z" fill="url(#win)" />
      </svg>
      <div className="ml-[17px] flex h-[40px] w-[275px] items-center rounded-full bg-[#4b3e33] pr-[8px] pl-[14px]">
        <Ic w={20} sw={2.200}>
          <circle cx="8.500" cy="8.500" r="6.800" />
          <path d="M13.500 13.500l5 5" />
        </Ic>
        <span className="mt-[1px] ml-[12px] text-[16.500px] tracking-[-0.2px] text-[#d8d2cd]">Search</span>
        <svg width="25" height="25" viewBox="0 0 25 25" className="ml-auto">
          <path d="M0 25V12.500A12.500 12.500 0 1 1 12.500 25z" fill="#1b7fe8" />
          <path d="M2.500 22.500v-10a10 10 0 1 1 10 10z" fill="#fff" />
          <path d="M8.500 5l3 1.300v9l5-2.800-2.800-1.400-1-2.600 5.300 2.500v4L11.500 19l-3-2z" fill="#1478e0" />
        </svg>
      </div>
      <div className="ml-[8px] flex gap-[12px]">
        <Slot>
          <svg width="29" height="29" viewBox="0 0 29 29">
            <defs>
              <linearGradient id="chat" x1="0" y1="0" x2="1" y2="0.600">
                <stop offset="0" stopColor="#8b6fae" />
                <stop offset="1" stopColor="#5b62d8" />
              </linearGradient>
            </defs>
            <path d="M0 28.500V14.500A14.300 14.300 0 1 1 14.500 28.500z" fill="url(#chat)" />
            <rect x="6" y="8" width="12" height="12" rx="2" fill="#fff" />
            <path d="M19 12.500l4-3v9l-4-3z" fill="#fff" />
          </svg>
        </Slot>
        <Adobe label="Ps" tone="bg-[#001e36] text-[#31a8ff]" />
        <Adobe label="Ae" tone="bg-[#00005b] text-[#9999ff]" />
        <Adobe label="Pr" tone="bg-[#00005b] text-[#9999ff]" />
        <Adobe label="Ai" tone="bg-[#330000] text-[#ff9a00]" />
        <Slot running>
          <svg width="30" height="28" viewBox="0 0 30 28">
            <path d="M0 2a2 2 0 0 1 2-2h7l3 3.500V8H0z" fill="#e0a30f" />
            <path d="M0 6h10.500L13 4h15a2 2 0 0 1 2 2v21a1 1 0 0 1-1 1H1a1 1 0 0 1-1-1z" fill="#ffcf48" />
            <path d="M5 28v-5.500c0-1.500 1-2.500 2.500-2.500h15c1.500 0 2.500 1 2.500 2.500V28z" fill="#1583d8" />
            <path d="M9 24h12" stroke="#0a4f94" strokeWidth="1.500" />
          </svg>
        </Slot>
        <Slot>
          <svg width="29" height="30" viewBox="0 0 29 30">
            <path d="M8.500 6V1.500h12V6" stroke="#35b7f0" strokeWidth="2" fill="none" />
            <path d="M0 4h29v22a4 4 0 0 1-4 4H4a4 4 0 0 1-4-4z" fill="#f3f3f3" />
            <path d="M9 11.500h5v5H9z" fill="#f25022" />
            <path d="M15 11.500h5v5h-5z" fill="#7fba00" />
            <path d="M9 17.500h5v5H9z" fill="#00a4ef" />
            <path d="M15 17.500h5v5h-5z" fill="#ffb900" />
            <path d="M8.500 6V3.500M20.500 6V3.500" stroke="#35b7f0" strokeWidth="2" />
          </svg>
        </Slot>
        <Slot>
          <svg width="30" height="31" viewBox="0 0 30 31">
            <defs>
              <linearGradient id="edge" x1="0" y1="0.300" x2="1" y2="0.500">
                <stop offset="0" stopColor="#1fa4e8" />
                <stop offset="0.600" stopColor="#35c1c8" />
                <stop offset="1" stopColor="#63de5a" />
              </linearGradient>
            </defs>
            <circle cx="15" cy="15.500" r="15" fill="#0f6cc4" />
            <path d="M0 14C1 5 7 .5 15 .5c9 0 15 6 15 13 0 5-4 7.500-8 7.500-3 0-5-1-5-2 0-.8 1.500-1.500 1.500-4 0-3-3-5.500-7-5.500C6 9.500 1 11 0 14z" fill="url(#edge)" />
            <path d="M11 13c-5 6-1 15 6 17 5-.5 9-3 11-6-9 3-16-1-15-8 0-2 1-3 2-3.500-1.500 0-3 0-4 .5z" fill="#11529c" />
            <path d="M15.500 13c-3 1.500-2 7 3 8.500 4 1 8 .5 11.500-2V23l-3 2c-8 2-14-3-14-8 0-2 1-4 2.500-4z" fill="#332217" />
          </svg>
        </Slot>
        <Slot>
          <svg width="30" height="29" viewBox="0 0 30 29">
            <path d="M0 10L15 0l15 10v5H0z" fill="#0a57a4" />
            <path d="M2 10h26v8L15 23 2 18z" fill="#f2f2f2" />
            <path d="M0 10l17 10L30 29H1a1 1 0 0 1-1-1z" fill="#2ba6ee" />
            <path d="M30 10v18a1 1 0 0 1-1 1H4z" fill="#45c3fa" />
            <path d="M0 29L16 19l14 10z" fill="#1f93e6" />
          </svg>
        </Slot>
        <Slot>
          <svg width="27" height="27" viewBox="0 0 27 27">
            <defs>
              <linearGradient id="stack" x1="0" y1="0" x2="1" y2="1">
                <stop offset="0" stopColor="#3d8cf0" />
                <stop offset="1" stopColor="#3cc8b4" />
              </linearGradient>
            </defs>
            <path d="M5 0h21v22H5z" fill="#c2388e" />
            <path d="M3 2h21v22H3z" fill="#d84bd8" />
            <path d="M0 5h21v22H0z" fill="url(#stack)" />
          </svg>
        </Slot>
        <Slot active>
          <svg width="29" height="30" viewBox="0 0 29 30">
            <defs>
              <linearGradient id="fox" x1="0.800" y1="0" x2="0.300" y2="1">
                <stop offset="0" stopColor="#fff44f" />
                <stop offset="0.450" stopColor="#ff980e" />
                <stop offset="0.800" stopColor="#ff3647" />
                <stop offset="1" stopColor="#e31587" />
              </linearGradient>
            </defs>
            <path d="M4 7c.5-1.500 1-2.500 1.500-3 .3 1.500 1.500 3 3 3.500C12 6.500 14 7 15 8c0-3.500 1.500-6 4-8 0 3 5 5 7 9 0-.8 0-1.500-.3-2C29 11 29.500 17 28 21c-2.500 6-8 9-13.500 9C6 30 0 23.500 0 16c0-4 1.500-7 4-9z" fill="url(#fox)" />
            <circle cx="15.500" cy="16" r="6" fill="#7a3fe0" />
            <path d="M7 11c3-1.500 5 0 8 .5-1 2-3 2-3 3 1 2.500 4 3.500 7 2.500-1 3.500-6 5-9.500 2.500C7 17.500 6 14 7 11z" fill="#ff7a1c" />
          </svg>
        </Slot>
        <Slot running>
          <svg width="29" height="29" viewBox="0 0 29 29">
            <circle cx="14.500" cy="14.500" r="14.300" fill="#1ed760" />
            <path d="M5.500 10c6-1.800 13-1.200 18.500 1.800M6.500 14.800c5-1.500 11-.8 15.500 1.700M7.500 19.300c4.200-1.200 8.800-.6 12.500 1.500" stroke="#1b1b1b" strokeWidth="2.400" strokeLinecap="round" fill="none" />
          </svg>
        </Slot>
        <Slot running>
          <svg width="27" height="27" viewBox="0 0 27 27">
            <defs>
              <linearGradient id="photo" x1="0" y1="0" x2="1" y2="1">
                <stop offset="0" stopColor="#1f86dd" />
                <stop offset="1" stopColor="#7a5bb8" />
              </linearGradient>
              <clipPath id="photoClip">
                <rect width="27" height="27" rx="3" />
              </clipPath>
            </defs>
            <rect width="27" height="27" rx="3" fill="url(#photo)" />
            <circle cx="20" cy="5.500" r="2.600" fill="#fff" />
            <g clipPath="url(#photoClip)">
              <path d="M0 20l9-9c1.500-1.500 3-1.500 4.500 0L27 25v2H0z" fill="#45c8fa" />
              <path d="M5 27l10-10.500c1.300-1.300 2.700-1.300 4 0L27 25v2z" fill="#1a78d6" />
            </g>
          </svg>
        </Slot>
      </div>
      <div className="ml-auto flex items-center pr-[25px]">
        <Ic w={14} h={8} vb="0 0 14 8" sw={2} className="-mt-[3px]">
          <path d="M1 7l6-5.500L13 7" />
        </Ic>
        <Ic w={16} h={20} vb="0 0 16 20" sw={1.200} className="ml-[28px]">
          <path d="M2.500 6V.7h7V6M8 19H1V6h10.500v9M9.500 16l2 2.500 3.500-4M4.500 3h.5M7 3h.5" />
        </Ic>
        <div className="ml-[22px] flex w-[32px] flex-col items-center text-[14.500px] leading-[20px] tracking-[-0.1px]">
          <span>ENG</span>
          <span>INTL</span>
        </div>
        <Ic w={20} h={16} vb="0 0 20 16" sw={1.800} className="ml-[21px]">
          <path d="M1 5.500c5-5 13-5 18 0M3.800 8.500c3.500-3.400 9-3.400 12.400 0M6.500 11.300c2-2 5-2 7 0" />
          <circle cx="10" cy="14" r="1" fill="currentColor" />
        </Ic>
        <Ic w={20} h={16} vb="0 0 20 16" sw={1.400} className="ml-[10px]">
          <path d="M1 5.500h3L8 2v12l-4-3.500H1zM11 5.500c1.300 1.500 1.300 3.500 0 5M13.500 3.500c2.500 2.700 2.500 6.300 0 9" />
          <path d="M16.300 1.500c3.500 3.800 3.500 9.200 0 13" opacity="0.350" />
        </Ic>
        <svg width="20" height="17" viewBox="0 0 20 17" className="ml-[10px]">
          <path d="M8 4h8a2 2 0 0 1 2 2v7a2 2 0 0 1-2 2H4a2 2 0 0 1-2-2v-3" fill="none" stroke="#fff" strokeWidth="1.400" />
          <path d="M8 6h7.500v7h-11v-2.500z" fill="#fff" stroke="#fff" />
          <path d="M18 7.500h2v4h-2zM4.500 0L0 6h3l-1 4 5-6H4z" fill="#fff" />
        </svg>
        <div className="-mt-[2px] ml-[16px] flex w-[65px] flex-col items-end text-[14.500px] leading-[20px] tracking-[-0.1px] whitespace-nowrap">
          <span>4:01 AM</span>
          <span>6/1/2023</span>
        </div>
        <svg width="18" height="19" viewBox="0 0 18 19" className="ml-[12px]">
          <path d="M8 1.500c-4 0-6 3-6 6v4L.5 14.500v1h15v-1L14 11.500V9H8V1.500zM5.500 16.500h5a2.500 2.300 0 0 1-5 0z" fill="#fff" />
          <path d="M8 1.500h3v8h3V14H5V6z" fill="#fff" />
          <path d="M6 7h4l-4 5h4" stroke="#332217" strokeWidth="1.300" fill="none" />
          <path d="M12.500 1.500h3.500l-3.500 4H16" stroke="#fff" strokeWidth="1.300" fill="none" />
        </svg>
      </div>
    </footer>
  );
}

export default function App() {
  return (
    <div className="flex h-[1080px] w-[1920px] flex-col overflow-hidden bg-[#1e1f21] font-['Open_Sans','Noto_Sans',sans-serif] font-light">
      <BrowserTabs />
      <BrowserToolbar />
      <div className="flex h-[914px]">
        <Sidebar />
        <main className="flex flex-1 flex-col">
          <ProjectHeader />
          <div className="flex flex-1">
            <Board />
            <TaskDetail />
          </div>
        </main>
      </div>
      <Taskbar />
    </div>
  );
}
